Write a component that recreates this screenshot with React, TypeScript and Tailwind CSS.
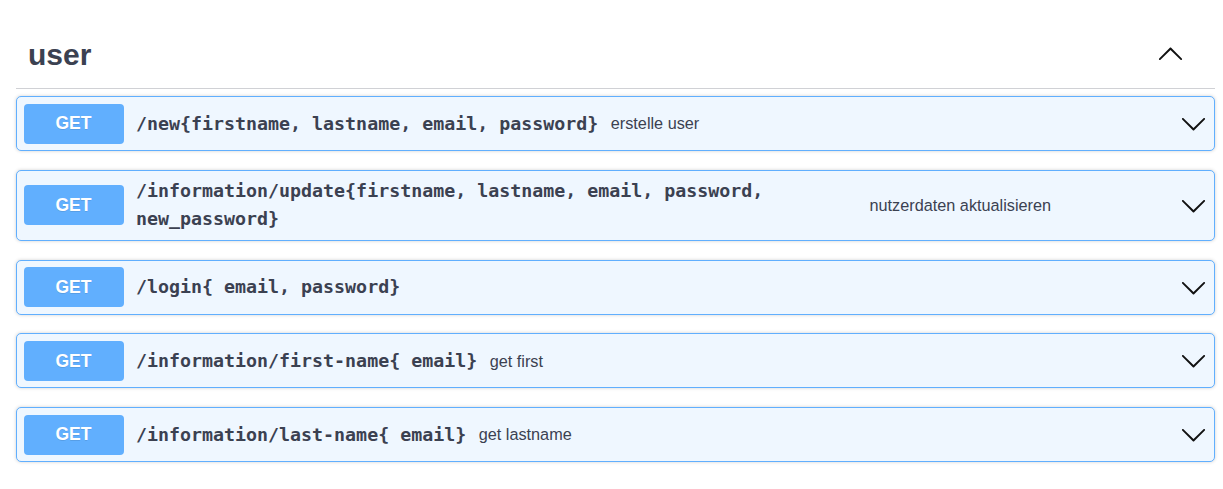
import type { ReactNode } from "react";

const ARROW =
  "M17.418 6.109c.272-.268.709-.268.979 0s.271.701 0 .969l-7.908 7.83c-.27.268-.707.268-.979 0l-7.908-7.83c-.27-.268-.27-.701 0-.969.271-.268.709-.268.979 0L10 13.25l7.418-7.141z";

function Arrow({ up = false }: { up?: boolean }) {
  return (
    <svg
      viewBox="0 0 20 20"
      className={up ? "w-[27px] h-[27px] rotate-180 fill-[#111]" : "w-[27px] h-[27px] fill-[#111]"}
      aria-hidden
    >
      <path d={ARROW} />
    </svg>
  );
}

type Op = { path: ReactNode; desc?: string; pathWidth?: string };

const ops: Op[] = [
  { path: "/new{firstname, lastname, email, password}", desc: "erstelle user" },
  {
    path: "/information/update{firstname, lastname, email, password, new_password}",
    desc: "nutzerdaten aktualisieren",
    pathWidth: "w-[746px]",
  },
  { path: "/login{ email, password}" },
  { path: "/information/first-name{ email}", desc: "get first" },
  { path: "/information/last-name{ email}", desc: "get lastname" },
];

function OpBlock({ op }: { op: Op }) {
  return (
    <div className="flex items-center rounded-[5px] border border-[#61affe] bg-[#eff7ff] p-[6.5px] pr-[6px] shadow-[0_0_3.75px_rgba(0,0,0,0.19)]">
      <span className="flex h-[40px] w-[100px] flex-none items-center justify-center rounded-[4px] bg-[#61affe] text-[17.5px] font-bold text-white [text-shadow:0_1px_0_rgba(0,0,0,0.1)] font-['Liberation_Sans',Arial,sans-serif]">
        GET
      </span>
      <span
        className={`${op.pathWidth ?? "flex-none"} px-[12.5px] text-[18.3px] leading-[28px] font-bold text-[#3b4151] font-['DejaVu_Sans_Mono',monospace]`}
      >
        {op.path}
      </span>
      <span className="flex-1 text-[16.25px] text-[#3b4151] font-['Liberation_Sans',Arial,sans-serif]">
        {op.desc}
      </span>
      <span className="mr-[1px] flex-none">
        <Arrow />
      </span>
    </div>
  );
}

export default function App() {
  return (
    <div className="min-h-screen bg-white pt-[21px]">
      <div className="ml-[16px] w-[1199px]">
        <div className="flex h-[68px] items-center border-b border-[#d0d1d5] pl-[12px] pr-[31px]">
          <h3 className="flex-1 text-[30px] font-bold text-[#3b4151] font-['Liberation_Sans',Arial,sans-serif]">
            user
          </h3>
          <Arrow up />
        </div>
        <div className="mt-[7px] flex flex-col gap-[18.75px]">
          {ops.map((op, i) => (
            <OpBlock key={i} op={op} />
          ))}
        </div>
      </div>
    </div>
  );
}
